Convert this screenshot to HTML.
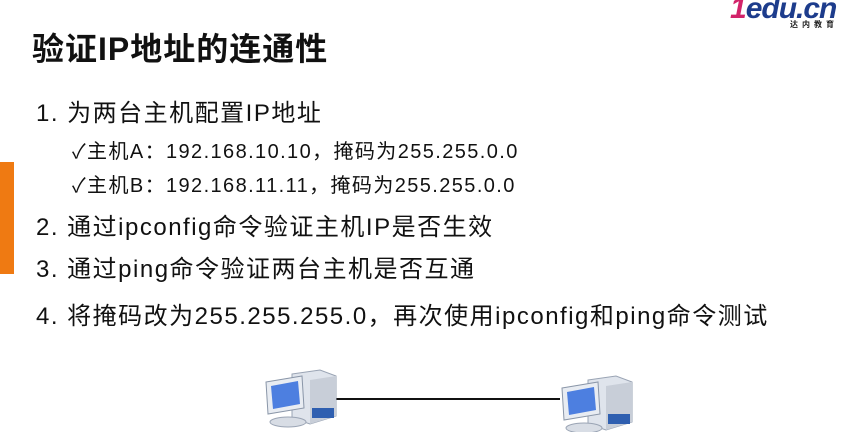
<!DOCTYPE html>
<html><head><meta charset="utf-8"><style>
body{margin:0;width:856px;height:432px;background:#fff;position:relative;overflow:hidden;font-family:"Liberation Sans","Noto Sans CJK SC",sans-serif;color:#111}
.t{position:absolute;white-space:nowrap}
.m{font-size:24px;letter-spacing:1.5px;line-height:28px}
.s{font-size:20px;letter-spacing:1.4px;line-height:24px}
</style></head><body>
<div class="t" style="left:730px;top:-8px;font:italic bold 30px 'Liberation Sans',sans-serif;letter-spacing:-1px"><span style="color:#d2236a">1</span><span style="color:#1d3c8c">edu.cn</span></div>
<div class="t" style="left:790px;top:19px;font-size:8px;font-weight:bold;letter-spacing:4px;color:#222">达内教育</div>
<div style="position:absolute;left:0;top:162px;width:14px;height:112px;background:#ef7a12"></div>
<div class="t" style="left:32px;top:31px;font-size:32px;font-weight:bold;letter-spacing:1px;line-height:36px">验证IP地址的连通性</div>
<div class="t m" style="left:36px;top:100px">1. 为两台主机配置IP地址</div>
<div class="t s" style="left:72px;top:140px">✓主机A：192.168.10.10，掩码为255.255.0.0</div>
<div class="t s" style="left:72px;top:174px">✓主机B：192.168.11.11，掩码为255.255.0.0</div>
<div class="t m" style="left:36px;top:214px">2. 通过ipconfig命令验证主机IP是否生效</div>
<div class="t m" style="left:36px;top:256px">3. 通过ping命令验证两台主机是否互通</div>
<div class="t m" style="left:36px;top:303px">4. 将掩码改为255.255.255.0，再次使用ipconfig和ping命令测试</div>
<div style="position:absolute;left:335px;top:398px;width:225px;height:2px;background:#111"></div>
<svg style="position:absolute;left:262px;top:368px" width="76" height="60" viewBox="0 0 76 60">
<polygon points="30,6 58,2 74,8 74,48 48,56 30,50" fill="#dfe4ec" stroke="#9aa4b4"/>
<polygon points="48,12 74,8 74,48 48,56" fill="#c8ced8"/>
<rect x="50" y="40" width="22" height="10" fill="#2f5fb0"/>
<polygon points="4,14 40,8 42,40 6,46" fill="#e8ecf2" stroke="#8a96a8"/>
<polygon points="9,18 36,13 38,36 11,41" fill="#4d7fe0"/>
<ellipse cx="26" cy="54" rx="18" ry="5" fill="#d8dde5" stroke="#9aa4b4"/>
</svg>
<svg style="position:absolute;left:558px;top:374px" width="76" height="58" viewBox="0 0 76 58">
<polygon points="30,6 58,2 74,8 74,48 48,56 30,50" fill="#dfe4ec" stroke="#9aa4b4"/>
<polygon points="48,12 74,8 74,48 48,56" fill="#c8ced8"/>
<rect x="50" y="40" width="22" height="10" fill="#2f5fb0"/>
<polygon points="4,14 40,8 42,40 6,46" fill="#e8ecf2" stroke="#8a96a8"/>
<polygon points="9,18 36,13 38,36 11,41" fill="#4d7fe0"/>
<ellipse cx="26" cy="54" rx="18" ry="5" fill="#d8dde5" stroke="#9aa4b4"/>
</svg>
</body></html>
